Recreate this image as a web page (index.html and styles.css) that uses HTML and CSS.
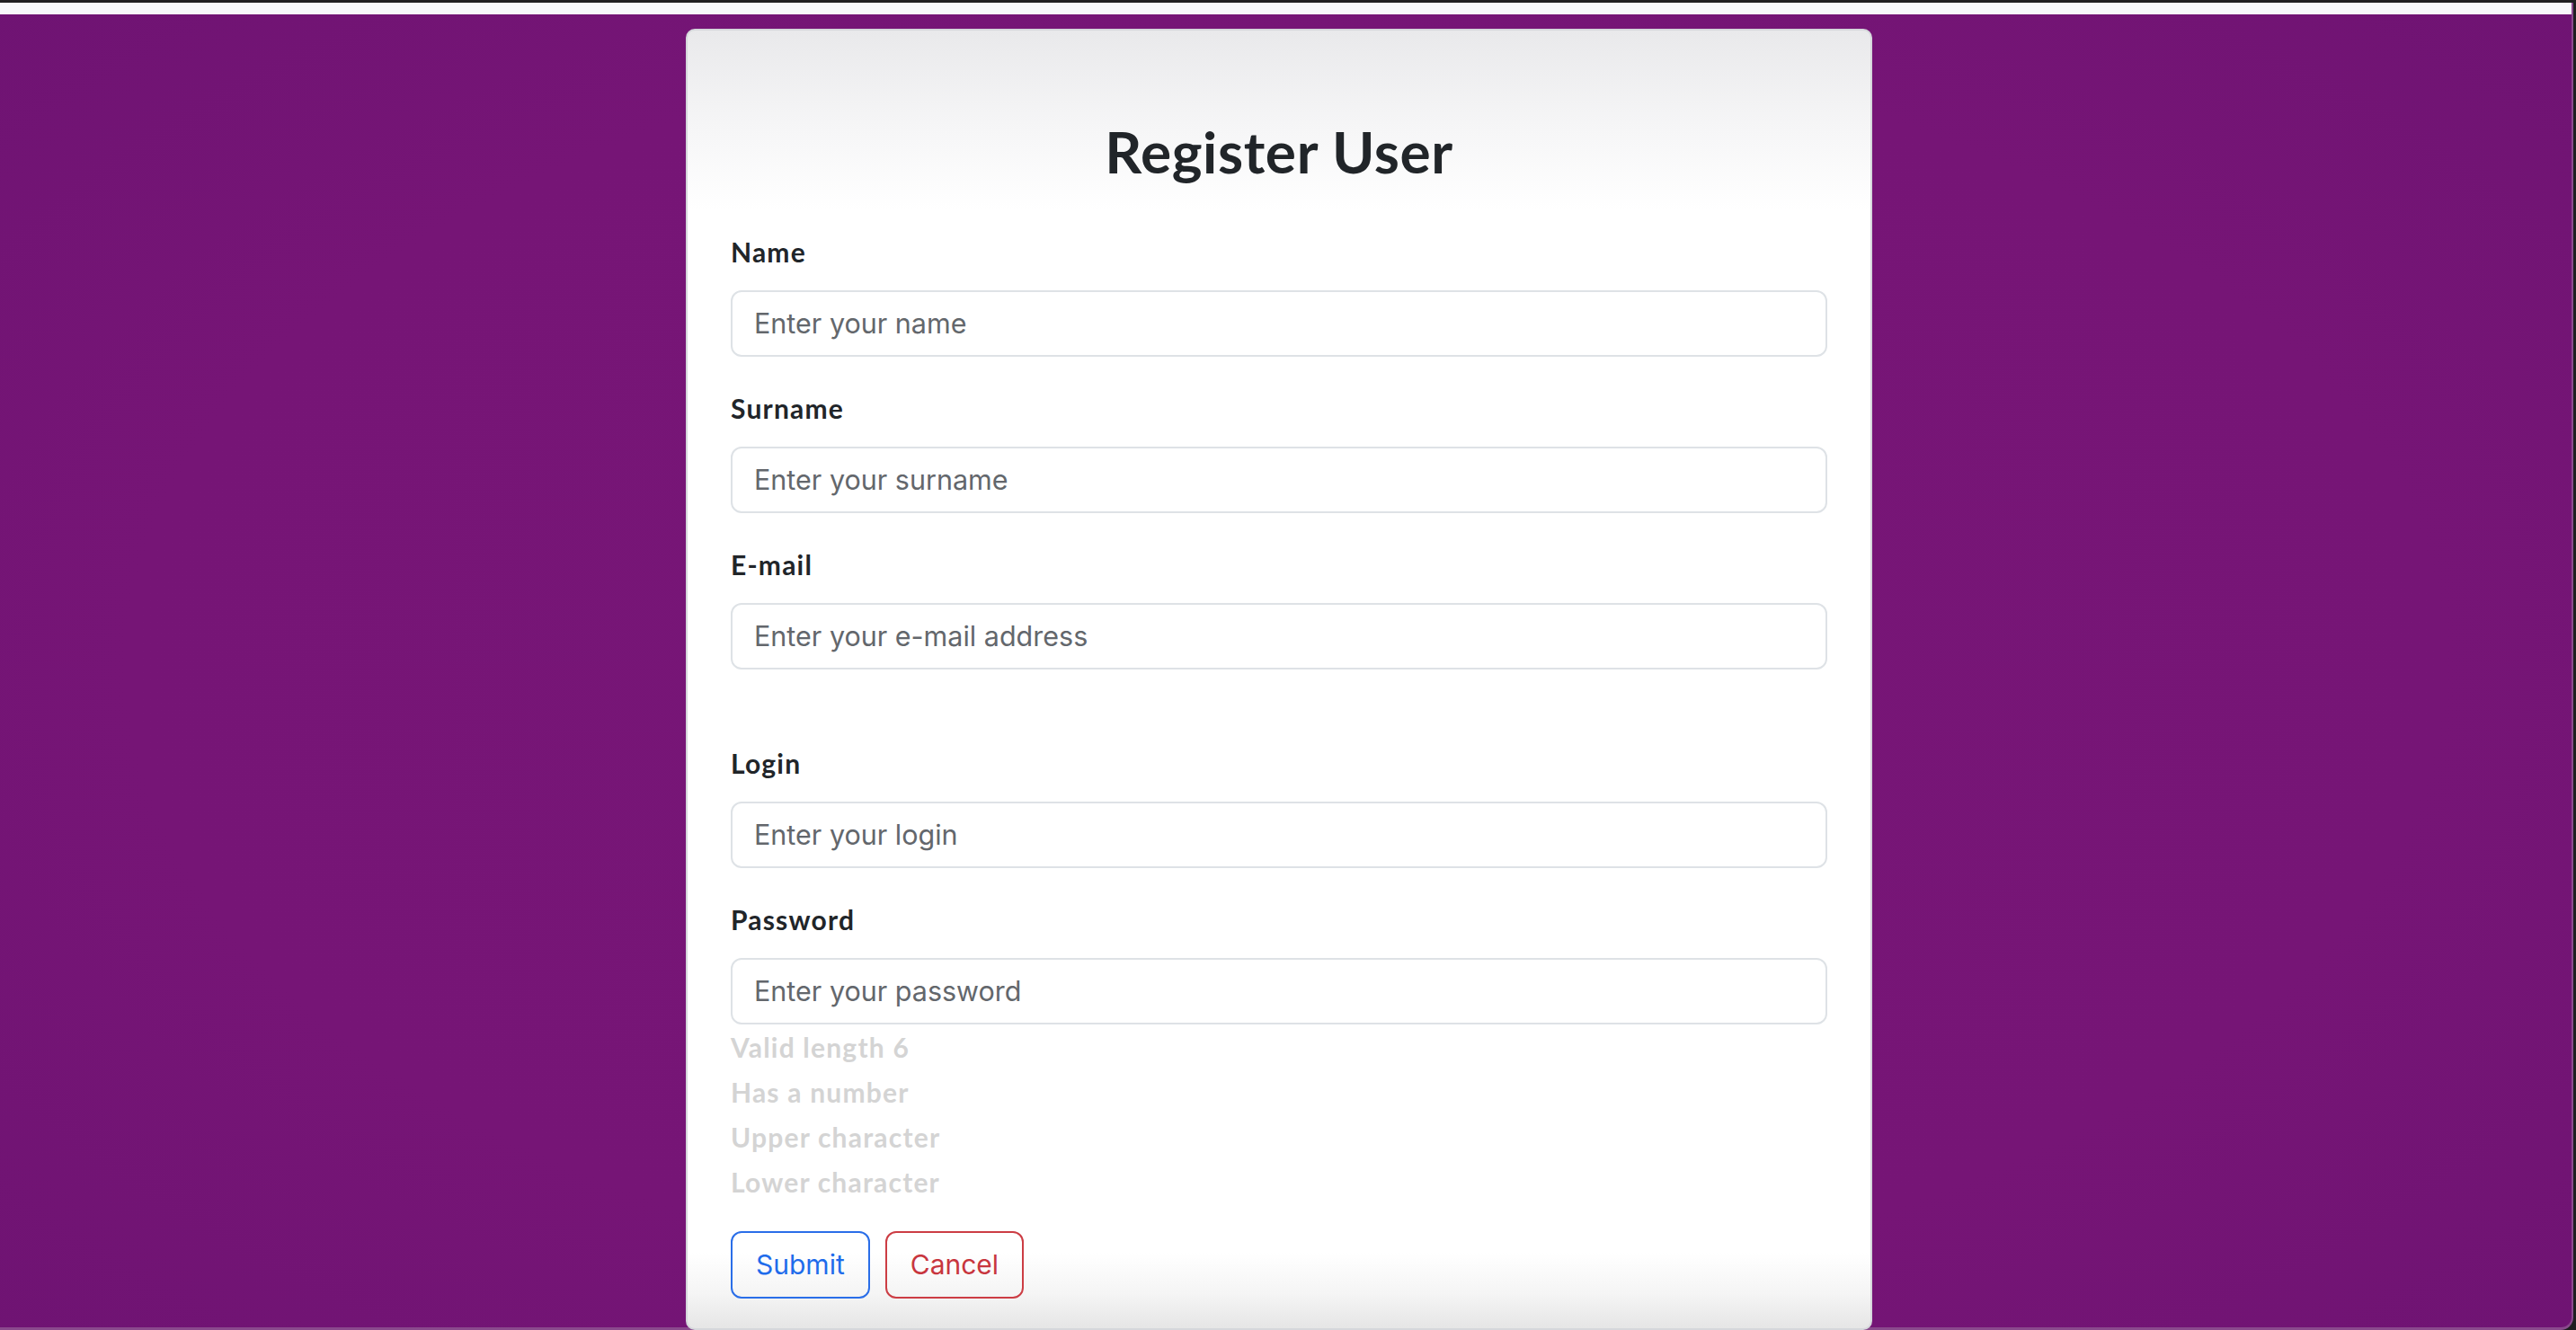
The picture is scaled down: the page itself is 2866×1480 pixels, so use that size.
FILE: index.html
```html
<!DOCTYPE html>
<html lang="en">
<head>
<meta charset="utf-8">
<title>Register User</title>
<link rel="stylesheet" href="styles.css">
</head>
<body>
<div class="window">
  <div class="topstrip"></div>
  <div class="stage">
    <div class="card">
      <h1 class="title">Register User</h1>
      <form class="form">
        <div class="group">
          <label class="label">Name</label>
          <input class="control" type="text" placeholder="Enter your name">
        </div>
        <div class="group">
          <label class="label">Surname</label>
          <input class="control" type="text" placeholder="Enter your surname">
        </div>
        <div class="group">
          <label class="label">E-mail</label>
          <input class="control" type="text" placeholder="Enter your e-mail address">
        </div>
        <div class="spacer"></div>
        <div class="group">
          <label class="label">Login</label>
          <input class="control" type="text" placeholder="Enter your login">
        </div>
        <div class="group group-last">
          <label class="label">Password</label>
          <input class="control" type="password" placeholder="Enter your password">
        </div>
        <ul class="rules">
          <li>Valid length 6</li>
          <li>Has a number</li>
          <li>Upper character</li>
          <li>Lower character</li>
        </ul>
        <div class="actions">
          <button type="button" class="btn btn-primary">Submit</button>
          <button type="button" class="btn btn-danger">Cancel</button>
        </div>
      </form>
    </div>
  </div>
</div>
</body>
</html>
```

FILE: styles.css
```css
html, body {
  margin: 0;
  padding: 0;
  height: 100%;
  overflow: hidden;
}
body {
  background: #1f1f21;
}
.window {
  box-sizing: border-box;
  height: 1477px;
  margin-top: 3px;
  margin-right: 3px;
  display: flex;
  flex-direction: column;
  border-right: 2px solid #8c4a8f;
  border-bottom: 3px solid #8a4a8d;
  border-bottom-right-radius: 14px;
  background: radial-gradient(ellipse 75% 80% at 50% 50%, #781677 0%, #761576 60%, #6d1372 100%);
}
.topstrip {
  height: 13px;
  background: #f7f8fa;
  flex: none;
}
.stage {
  flex: 1;
  display: flex;
  justify-content: center;
  padding-top: 16px;
  padding-right: 15px;
  min-height: 0;
}
.card {
  box-sizing: border-box;
  width: 1320px;
  height: 1448px;
  flex: none;
  border: 2px solid #d5d7db;
  border-radius: 10px;
  padding: 0 48px;
  background: linear-gradient(to bottom, #e9e9eb 0px, #f6f6f7 110px, #ffffff 200px, #ffffff 1360px, #f5f5f5 1405px, #e4e4e4 1448px);
}
.title {
  margin: 97px 0 0;
  text-align: center;
  font-family: "Lato", "Noto Sans", sans-serif;
  font-weight: 700;
  font-size: 64px;
  line-height: 1.2;
  letter-spacing: 0.6px;
  color: #212529;
}
.form {
  margin-top: 50px;
}
.group {
  display: flex;
  flex-direction: column;
  margin-bottom: 35px;
}
.group-last {
  margin-bottom: 0;
}
.label {
  font-family: "Lato", "Noto Sans", sans-serif;
  font-weight: 700;
  font-size: 30px;
  line-height: 45px;
  letter-spacing: 1.2px;
  color: #212529;
  margin-bottom: 20px;
}
.control {
  box-sizing: border-box;
  height: 74px;
  width: 100%;
  border: 2px solid #dee2e6;
  border-radius: 12px;
  padding: 0 24px;
  font-family: "Inter", "Liberation Sans", sans-serif;
  font-size: 30.5px;
  color: #212529;
  background: #fff;
  outline: none;
}
.control::placeholder {
  color: #63676c;
  opacity: 1;
}
.spacer {
  height: 47px;
}
.rules {
  list-style: none;
  margin: 0;
  padding: 0;
  font-family: "Lato", "Noto Sans", sans-serif;
  font-weight: 700;
  font-size: 30px;
  line-height: 50px;
  letter-spacing: 1.2px;
  color: #d4d4d4;
}
.actions {
  display: flex;
  gap: 17px;
  margin-top: 30px;
}
.btn {
  box-sizing: border-box;
  height: 75px;
  padding: 0 26px;
  border: 2px solid;
  border-radius: 12px;
  background: transparent;
  font-family: "Inter", "Liberation Sans", sans-serif;
  font-size: 30px;
  cursor: pointer;
}
.btn-primary {
  color: #1f6ceb;
  border-color: #2a6ee8;
}
.btn-danger {
  color: #c8363e;
  border-color: #cc3d44;
}
```
